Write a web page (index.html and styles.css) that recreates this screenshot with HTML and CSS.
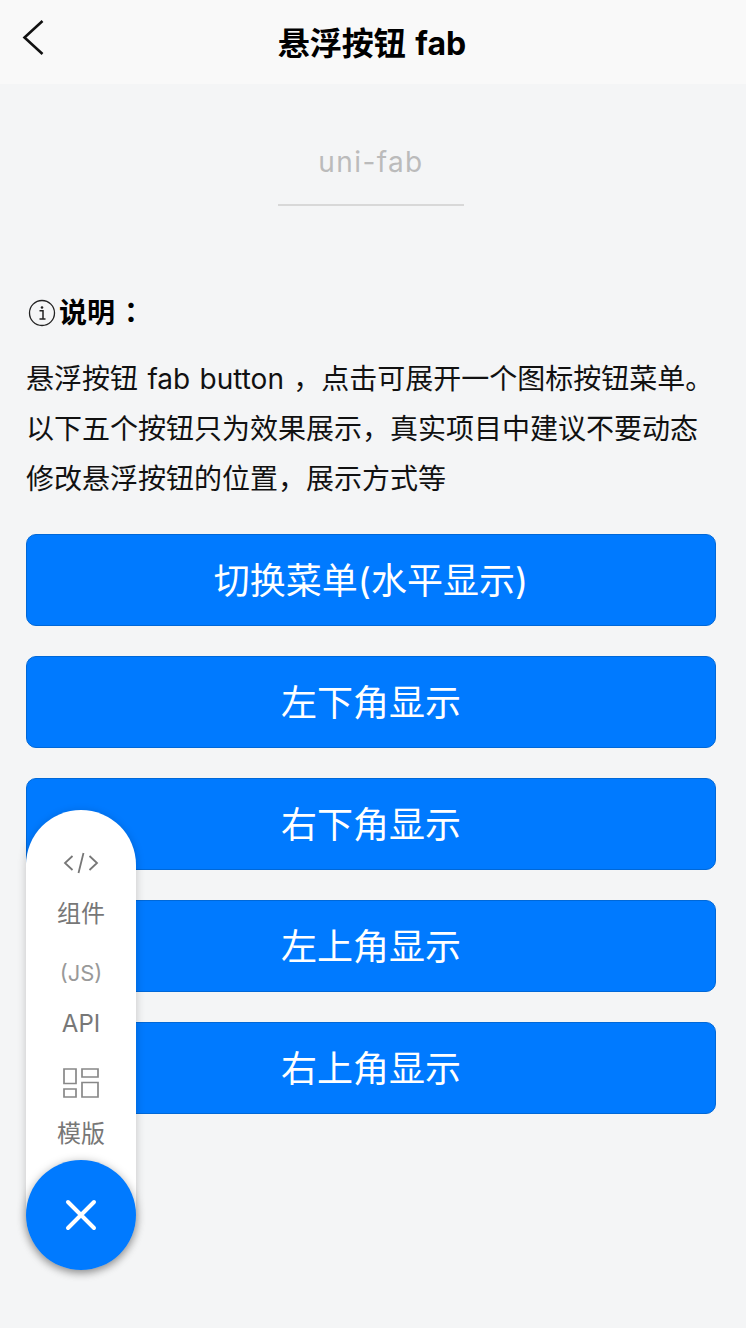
FILE: index.html
```html
<!DOCTYPE html>
<html>
<head>
  <meta name="viewport" content="width=device-width,initial-scale=1.0">
  <title>悬浮按钮 fab</title>
  <link rel="stylesheet" href="styles.css">
</head>
<body>
  <div class="navbar">
    <svg class="nav-back" width="24" height="38" viewBox="0 0 24 38">
      <path d="M21.5 2 L3.5 18.500 L21.500 35" fill="none" stroke="#111" stroke-width="2.600"/>
    </svg>
    <div class="nav-title">悬浮按钮 fab</div>
  </div>

  <div class="page-head">
    <div class="page-title">uni-fab</div>
    <div class="page-line"></div>
  </div>

  <div class="intro">
    <div class="intro-head">
      <svg class="info-icon" width="28" height="28" viewBox="0 0 28 28">
        <circle cx="14" cy="14" r="12.500" fill="none" stroke="#222" stroke-width="1.300"/>
        <circle cx="14" cy="8.500" r="1.300" fill="#222"/>
        <path d="M11.500 11.800 H15 V19.500 M11.500 20 H17.500" fill="none" stroke="#222" stroke-width="1.500"/>
      </svg>
      <span>说明<span class="colon">：</span></span>
    </div>
    <div class="intro-text">悬浮按钮 fab button ，点击可展开一个图标按钮菜单。以下五个按钮只为效果展示，真实项目中建议不要动态修改悬浮按钮的位置，展示方式等</div>
  </div>

  <div class="btn-list">
    <button class="btn" type="button">切换菜单(水平显示)</button>
    <button class="btn" type="button">左下角显示</button>
    <button class="btn" type="button">右下角显示</button>
    <button class="btn" type="button">左上角显示</button>
    <button class="btn" type="button">右上角显示</button>
  </div>

  <div class="fab">
    <div class="fab-item">
      <div class="fab-icon">
        <svg width="36" height="24" viewBox="0 0 36 24">
          <path d="M9.500 5 L2 12 L9.500 19 M26.500 5 L34 12 L26.500 19 M20.500 2 L15.500 22" fill="none" stroke="#777" stroke-width="1.800"/>
        </svg>
      </div>
      <div class="fab-label">组件</div>
    </div>
    <div class="fab-item">
      <div class="fab-icon fab-js">(JS)</div>
      <div class="fab-label">API</div>
    </div>
    <div class="fab-item">
      <div class="fab-icon">
        <svg width="36" height="30" viewBox="0 0 36 30">
          <path d="M1 1 H13 V15.500 H1 Z M1 21 H13 V29 H1 Z M19 1 H35 V9 H19 Z M19 14.500 H35 V29 H19 Z" fill="none" stroke="#888" stroke-width="1.700"/>
        </svg>
      </div>
      <div class="fab-label">模版</div>
    </div>
    <div class="fab-main">
      <svg width="32" height="32" viewBox="0 0 32 32">
        <path d="M3 3 L29 29 M29 3 L3 29" fill="none" stroke="#fff" stroke-width="4" stroke-linecap="round"/>
      </svg>
    </div>
  </div>
</body>
</html>
```

FILE: styles.css
```css
* {
  box-sizing: border-box;
}

body {
  margin: 0;
  min-height: 1328px;
  overflow: hidden;
  background: #f4f5f6;
  color: #000;
  font-family: Inter, "Noto Sans CJK SC", sans-serif;
}

.navbar {
  position: relative;
  height: 84px;
  padding: 4px 2px 0 0;
  background: #f9f9f9;
  display: flex;
  justify-content: center;
  align-items: center;
}

.nav-back {
  position: absolute;
  left: 21px;
  top: 19px;
}

.nav-title {
  font-size: 32px;
  font-weight: 700;
  line-height: 44px;
  word-spacing: 2px;
}

.page-head {
  padding: 56px 4px 0 0;
  display: flex;
  flex-direction: column;
  align-items: center;
}

.page-title {
  font-size: 28px;
  line-height: 44px;
  letter-spacing: 1.400px;
  color: #bbb;
}

.page-line {
  width: 186px;
  height: 2px;
  margin-top: 20px;
  background: #d8d8d8;
}

.intro {
  padding: 84px 26px 0;
}

.intro-head {
  display: flex;
  align-items: center;
  height: 44px;
  font-size: 28px;
  font-weight: 700;
  line-height: 44px;
}

.colon {
  margin-left: 2px;
  font-family: "Noto Sans CJK TC", sans-serif;
}

.info-icon {
  margin: 2px 3px 0 2px;
}

.intro-text {
  margin-top: 20px;
  font-size: 28px;
  line-height: 50px;
  word-spacing: 1.500px;
  color: #111;
}

.btn-list {
  padding: 30px 30px 0 26px;
  display: flex;
  flex-direction: column;
  gap: 30px;
}

.btn {
  display: block;
  width: 100%;
  height: 92px;
  padding: 0 0 4px;
  border: 1px solid #0068d8;
  border-radius: 10px;
  background: #007aff;
  color: #fff;
  font-family: inherit;
  font-size: 36px;
}

.fab {
  position: absolute;
  left: 26px;
  top: 810px;
  width: 110px;
  height: 460px;
  padding-top: 30px;
  border-radius: 55px;
  background: #fff;
  box-shadow: 0 2px 10px rgba(0, 0, 0, 0.2);
}

.fab-item {
  height: 110px;
  display: flex;
  flex-direction: column;
  align-items: center;
}

.fab-icon {
  height: 46px;
  display: flex;
  align-items: center;
  justify-content: center;
}

.fab-js {
  font-size: 22px;
  color: #999;
}

.fab-label {
  margin-top: 11px;
  font-size: 24px;
  line-height: 34px;
  color: #777;
}

.fab-main {
  position: absolute;
  left: 0;
  bottom: 0;
  width: 110px;
  height: 110px;
  border-radius: 50%;
  background: #007aff;
  box-shadow: 0 2px 10px rgba(0, 0, 0, 0.35);
  display: flex;
  align-items: center;
  justify-content: center;
}
```
